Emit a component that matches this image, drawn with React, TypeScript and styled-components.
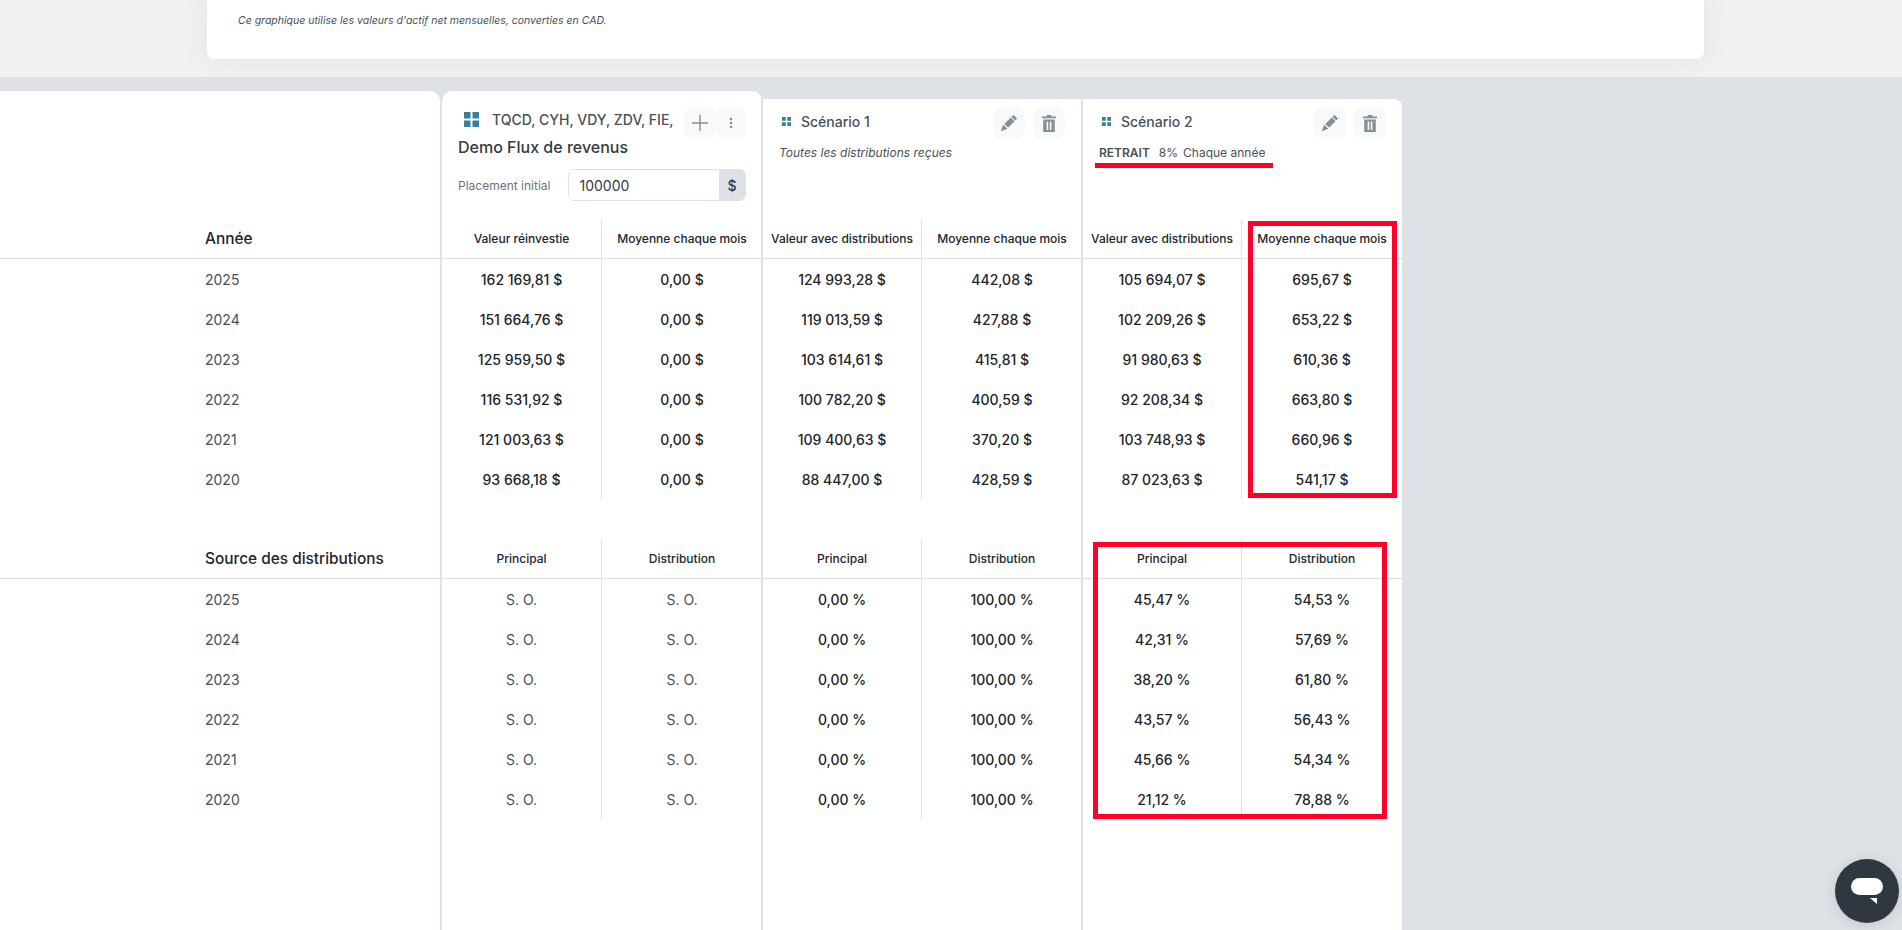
import React from "react";
import styled, { createGlobalStyle } from "styled-components";
import { BsPencilFill } from "react-icons/bs";

const GlobalStyle = createGlobalStyle`
  html, body {
    margin: 0;
    height: 100%;
    overflow: hidden;
    background: #f1f1f1;
    font-family: Inter, "Noto Sans", "Liberation Sans", sans-serif;
    color: #212529;
  }
  #root {
    height: 100%;
  }
`;

const Page = styled.div`
  display: flex;
  flex-direction: column;
  height: 100%;
`;

const TopArea = styled.section`
  flex: none;
  height: 77px;
  padding-left: 206px;
  box-sizing: border-box;
  overflow: hidden;
`;

const NoteCard = styled.div`
  width: 1499px;
  height: 60px;
  box-sizing: border-box;
  padding: 12px 31px;
  background: #fff;
  border: 1px solid #e9e9e9;
  border-top: 0;
  border-radius: 0 0 8px 8px;
  box-shadow: 0 0 30px rgba(0, 0, 0, 0.06);
`;

const Note = styled.p`
  margin: 0;
  font-size: 10.5px;
  line-height: 18px;
  font-style: italic;
  color: #495057;
`;

const Band = styled.section`
  flex: 1;
  display: flex;
  align-items: stretch;
  min-height: 0;
  padding-top: 14px;
  background: #dee2e6;
`;

const LabelColumn = styled.div`
  flex: none;
  width: 440px;
  background: #fff;
  border-radius: 0 10px 0 0;
`;

const FundColumn = styled.div`
  flex: none;
  width: 320px;
  margin-left: 2px;
  background: #fff;
  border-radius: 10px 10px 0 0;
`;

const ScenarioColumn = styled.div<{ $last?: boolean }>`
  position: relative;
  flex: none;
  width: 321px;
  box-sizing: border-box;
  margin: 8px 0 0 -1px;
  background: #fff;
  border-left: 2px solid #dee2e6;
  border-radius: ${(p) => (p.$last ? "0 8px 0 0" : "0")};
`;

const Spacer = styled.div<{ $height: number }>`
  height: ${(p) => p.$height}px;
`;

const FundHead = styled.div`
  height: 128px;
  box-sizing: border-box;
  padding: 16px 16px 0;
`;

const FundTop = styled.div`
  display: flex;
  height: 28px;
`;

const FundLabel = styled.div`
  display: flex;
  align-items: center;
  height: 24px;
  width: 220px;
  flex: none;
  margin-right: 6px;
  padding-left: 6px;
  box-sizing: border-box;
  gap: 13px;
`;

const Tickers = styled.span`
  flex: 1;
  min-width: 0;
  overflow: hidden;
  white-space: nowrap;
  font-size: 14px;
  font-weight: 450;
  color: #495057;
`;

const IconButton = styled.button<{ $width?: number }>`
  display: flex;
  align-items: center;
  justify-content: center;
  flex: none;
  width: ${(p) => p.$width ?? 32}px;
  height: 32px;
  padding: 0;
  border: 0;
  border-radius: 9px;
  background: #f8f9fa;
  color: #868e96;
`;

const FundTitle = styled.h2`
  margin: 0;
  font-size: 16px;
  line-height: 24px;
  font-weight: 450;
  color: #343a40;
`;

const PlacementRow = styled.div`
  display: flex;
  align-items: center;
  gap: 18px;
  margin-top: 10px;
`;

const PlacementLabel = styled.label`
  font-size: 12px;
  font-weight: 400;
  color: #6c757d;
  white-space: nowrap;
`;

const InputGroup = styled.div`
  display: flex;
  width: 179px;
  height: 32px;
  box-sizing: border-box;
  border: 1px solid #dee2e6;
  border-radius: 6px;
  overflow: hidden;
`;

const AmountInput = styled.input`
  flex: 1;
  min-width: 0;
  padding: 0 10px;
  border: 0;
  outline: 0;
  font: inherit;
  font-size: 14px;
  color: #343a40;
`;

const Addon = styled.span`
  display: flex;
  align-items: center;
  justify-content: center;
  width: 26px;
  background: #dee2e6;
  font-size: 14px;
  font-weight: 500;
  color: #343a40;
`;

const ScenarioHead = styled.div<{ $trail: number }>`
  position: relative;
  height: 120px;
  box-sizing: border-box;
  padding: 8px ${(p) => p.$trail}px 0 16px;
`;

const ScenarioTop = styled.div`
  display: flex;
  gap: 8px;
`;

const ScenarioName = styled.div`
  flex: 1;
  display: flex;
  align-items: center;
  gap: 10px;
  height: 29px;
  padding-left: 3px;
  font-size: 14px;
  font-weight: 450;
  color: #495057;
`;

const Description = styled.p`
  margin: 5px 0 0;
  font-size: 12px;
  line-height: 18px;
  font-style: italic;
  color: #495057;
`;

const Withdrawal = styled.p`
  display: flex;
  margin: 5px 0 0;
  font-size: 12px;
  line-height: 18px;
  color: #495057;
`;

const WithdrawalKind = styled.strong`
  font-weight: 600;
  margin-right: 9px;
`;

const WithdrawalRate = styled.span`
  margin-right: 5px;
`;

const Section = styled.div`
  margin-bottom: 40px;
`;

const LabelHeader = styled.div`
  display: flex;
  align-items: center;
  height: 40px;
  box-sizing: border-box;
  padding: 0 0 1px 205px;
  border-bottom: 1px solid #dee2e6;
  font-size: 15.4px;
  font-weight: 450;
  color: #212529;
`;

const YearCell = styled.div`
  display: flex;
  align-items: center;
  height: 40px;
  padding-left: 205px;
  font-size: 14px;
  color: #495057;
`;

const SubGrid = styled.div`
  display: grid;
  grid-template-columns: 1fr 160px;
`;

const HeaderRow = styled(SubGrid)`
  height: 40px;
  border-bottom: 1px solid #dee2e6;
  box-sizing: border-box;
`;

const HeaderCell = styled.div<{ $divider?: boolean }>`
  display: flex;
  align-items: center;
  justify-content: center;
  padding-bottom: 1px;
  font-size: 12px;
  font-weight: 450;
  color: #212529;
  white-space: nowrap;
  border-right: ${(p) => (p.$divider ? "1px solid #dee2e6" : "0")};
`;

const ValueCell = styled.div<{ $divider?: boolean; $muted?: boolean }>`
  display: flex;
  align-items: center;
  justify-content: center;
  height: 40px;
  font-size: 14px;
  font-weight: ${(p) => (p.$muted ? 400 : 450)};
  color: ${(p) => (p.$muted ? "#495057" : "#212529")};
  border-right: ${(p) => (p.$divider ? "1px solid #dee2e6" : "0")};
`;

const Highlight = styled.div<{ $left: number; $top: number; $width: number }>`
  position: absolute;
  left: ${(p) => p.$left}px;
  top: ${(p) => p.$top}px;
  width: ${(p) => p.$width}px;
  height: 277px;
  box-sizing: border-box;
  border: 5px solid #ff0029;
  pointer-events: none;
`;

const RedUnderline = styled.div`
  position: absolute;
  left: 12px;
  top: 64px;
  width: 178px;
  height: 5px;
  background: #ff0029;
`;

const ChatButton = styled.button`
  position: fixed;
  right: 3px;
  bottom: 7px;
  display: flex;
  align-items: center;
  justify-content: center;
  width: 64px;
  height: 64px;
  padding: 0;
  border: 0;
  border-radius: 50%;
  background: #2f3841;
  box-shadow: 0 2px 14px rgba(0, 0, 0, 0.12);
`;

const GridIcon = ({ size, gap }: { size: number; gap: number }) => {
  const cell = (size - gap) / 2;
  return (
    <svg width={size} height={size} viewBox={`0 0 ${size} ${size}`} style={{ flex: "none" }}>
      {[0, cell + gap].map((x) =>
        [0, cell + gap].map((y) => <rect key={`${x}-${y}`} x={x} y={y} width={cell} height={cell} fill="#3b7f95" />),
      )}
    </svg>
  );
};

const PlusIcon = () => (
  <svg width="18" height="18" viewBox="0 0 18 18">
    <path d="M9 1v16M1 9h16" stroke="currentColor" strokeWidth="1.4" fill="none" />
  </svg>
);

const DotsIcon = () => (
  <svg width="4" height="12" viewBox="0 0 4 12">
    <circle cx="2" cy="2" r="1.3" fill="currentColor" />
    <circle cx="2" cy="6" r="1.3" fill="currentColor" />
    <circle cx="2" cy="10" r="1.3" fill="currentColor" />
  </svg>
);

const TrashIcon = () => (
  <svg width="14" height="17" viewBox="0 0 14 17">
    <path
      fill="currentColor"
      fillRule="evenodd"
      d="M5 0h4l.6 1.4H14v1.8H0V1.4h4.4zM1.2 4.4h11.6V17H1.2zM4.6 6.4v8.6h1.6V6.4zM7.8 6.4v8.6h1.6V6.4z"
    />
  </svg>
);

const ChatIcon = () => (
  <svg width="32" height="26" viewBox="0 0 32 26">
    <rect x="0" y="0" width="32" height="17" rx="8.5" fill="#fff" />
    <path d="M19 20h7v6z" fill="#fff" />
  </svg>
);

const years = ["2025", "2024", "2023", "2022", "2021", "2020"];
const na = "S.\u00a0O.";
const money = (v: string) => `${v.replace(" ", "\u00a0")}\u00a0$`;
const pct = (v: string) => `${v}\u00a0%`;

const LabelBlock = ({ title }: { title: string }) => (
  <Section>
    <LabelHeader>{title}</LabelHeader>
    {years.map((y) => (
      <YearCell key={y}>{y}</YearCell>
    ))}
  </Section>
);

type BlockProps = { heads: [string, string]; first: string[]; second: string[]; muted?: boolean };

const DataBlock = ({ heads, first, second, muted }: BlockProps) => (
  <Section>
    <HeaderRow>
      <HeaderCell $divider>{heads[0]}</HeaderCell>
      <HeaderCell>{heads[1]}</HeaderCell>
    </HeaderRow>
    {first.map((v, i) => (
      <SubGrid key={years[i]}>
        <ValueCell $divider $muted={muted}>
          {v}
        </ValueCell>
        <ValueCell $muted={muted}>{second[i]}</ValueCell>
      </SubGrid>
    ))}
  </Section>
);

const valueHeads: [string, string] = ["Valeur avec distributions", "Moyenne chaque mois"];
const sourceHeads: [string, string] = ["Principal", "Distribution"];

const ScenarioActions = () => (
  <>
    <IconButton>
      <BsPencilFill size={16} />
    </IconButton>
    <IconButton>
      <TrashIcon />
    </IconButton>
  </>
);

export default function App() {
  return (
    <Page>
      <GlobalStyle />
      <TopArea>
        <NoteCard>
          <Note>Ce graphique utilise les valeurs d'actif net mensuelles, converties en CAD.</Note>
        </NoteCard>
      </TopArea>
      <Band>
        <LabelColumn>
          <Spacer $height={128} />
          <LabelBlock title="Année" />
          <LabelBlock title="Source des distributions" />
        </LabelColumn>

        <FundColumn>
          <FundHead>
            <FundTop>
              <FundLabel>
                <GridIcon size={15} gap={2} />
                <Tickers>TQCD, CYH, VDY, ZDV, FIE, PDC, XEI</Tickers>
              </FundLabel>
              <IconButton>
                <PlusIcon />
              </IconButton>
              <IconButton $width={30}>
                <DotsIcon />
              </IconButton>
            </FundTop>
            <FundTitle>Demo Flux de revenus</FundTitle>
            <PlacementRow>
              <PlacementLabel>Placement initial</PlacementLabel>
              <InputGroup>
                <AmountInput defaultValue="100000" />
                <Addon>$</Addon>
              </InputGroup>
            </PlacementRow>
          </FundHead>
          <DataBlock
            heads={["Valeur réinvestie", "Moyenne chaque mois"]}
            first={["162 169,81", "151 664,76", "125 959,50", "116 531,92", "121 003,63", "93 668,18"].map(money)}
            second={years.map(() => money("0,00"))}
          />
          <DataBlock heads={sourceHeads} first={years.map(() => na)} second={years.map(() => na)} muted />
        </FundColumn>

        <ScenarioColumn>
          <ScenarioHead $trail={17}>
            <ScenarioTop>
              <ScenarioName>
                <GridIcon size={9} gap={1.5} />
                Scénario 1
              </ScenarioName>
              <ScenarioActions />
            </ScenarioTop>
            <Description>Toutes les distributions reçues</Description>
          </ScenarioHead>
          <DataBlock
            heads={valueHeads}
            first={["124 993,28", "119 013,59", "103 614,61", "100 782,20", "109 400,63", "88 447,00"].map(money)}
            second={["442,08", "427,88", "415,81", "400,59", "370,20", "428,59"].map(money)}
          />
          <DataBlock
            heads={sourceHeads}
            first={years.map(() => pct("0,00"))}
            second={years.map(() => pct("100,00"))}
          />
        </ScenarioColumn>

        <ScenarioColumn $last>
          <ScenarioHead $trail={16}>
            <ScenarioTop>
              <ScenarioName>
                <GridIcon size={9} gap={1.5} />
                Scénario 2
              </ScenarioName>
              <ScenarioActions />
            </ScenarioTop>
            <Withdrawal>
              <WithdrawalKind>RETRAIT</WithdrawalKind>
              <WithdrawalRate>8%</WithdrawalRate>
              Chaque année
            </Withdrawal>
            <RedUnderline />
          </ScenarioHead>
          <DataBlock
            heads={valueHeads}
            first={["105 694,07", "102 209,26", "91 980,63", "92 208,34", "103 748,93", "87 023,63"].map(money)}
            second={["695,67", "653,22", "610,36", "663,80", "660,96", "541,17"].map(money)}
          />
          <DataBlock
            heads={sourceHeads}
            first={["45,47", "42,31", "38,20", "43,57", "45,66", "21,12"].map(pct)}
            second={["54,53", "57,69", "61,80", "56,43", "54,34", "78,88"].map(pct)}
          />
          <Highlight $left={165} $top={122} $width={149} />
          <Highlight $left={10} $top={443} $width={294} />
        </ScenarioColumn>
      </Band>
      <ChatButton aria-label="Chat">
        <ChatIcon />
      </ChatButton>
    </Page>
  );
}
